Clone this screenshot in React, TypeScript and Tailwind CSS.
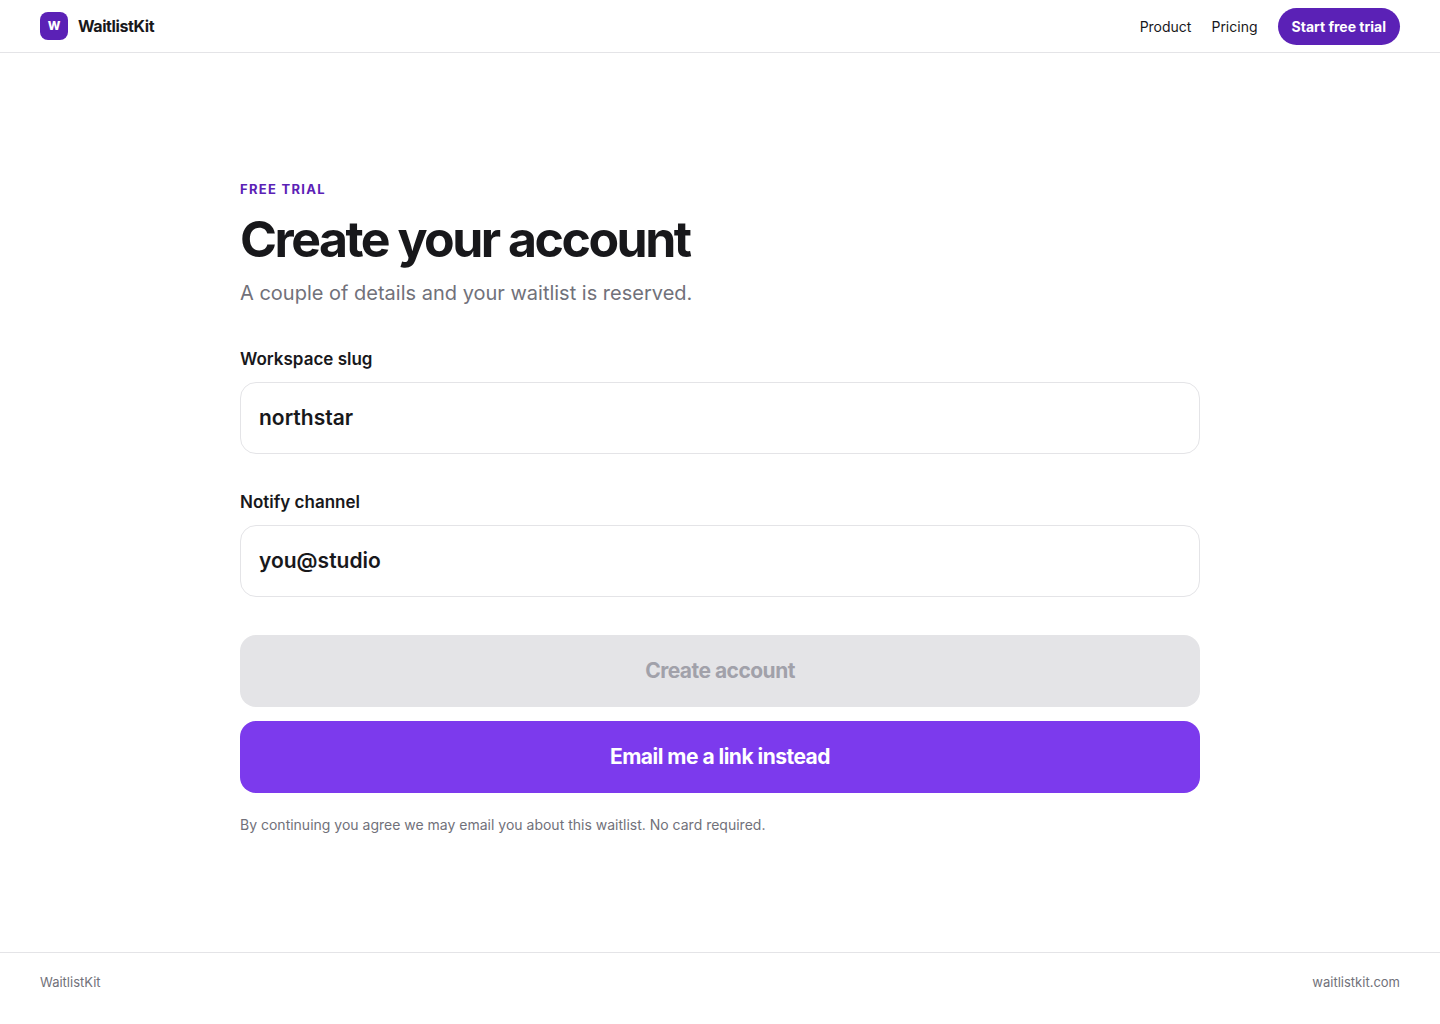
import { useState } from 'react'
import type { FormEvent } from 'react'

interface FieldProps {
  id: string
  label: string
  value: string
  onChange: (value: string) => void
}

const NAV_LINKS = [
  { label: 'Product', href: '#product' },
  { label: 'Pricing', href: '#pricing' },
]

function Header() {
  return (
    <header className="flex h-[53px] items-center justify-between border-b border-[#e4e4e7] px-10">
      <a href="#home" className="flex items-center gap-2.5">
        <span
          className="flex size-7 items-center justify-center rounded-lg bg-[#5b21b6] text-xs font-extrabold text-white"
          aria-hidden="true"
        >
          W
        </span>
        <span className="text-base font-bold tracking-tight">WaitlistKit</span>
      </a>

      <nav className="flex items-center gap-5 text-sm leading-[21px]" aria-label="Main">
        {NAV_LINKS.map((link) => (
          <a key={link.href} href={link.href}>
            {link.label}
          </a>
        ))}
        <a
          href="#trial"
          className="rounded-full bg-[#5b21b6] px-3.5 py-2 font-bold text-white hover:bg-violet-700"
        >
          Start free trial
        </a>
      </nav>
    </header>
  )
}

function Field({ id, label, value, onChange }: FieldProps) {
  return (
    <div className="flex flex-col gap-[11px]">
      <label htmlFor={id} className="text-[17px] leading-6 font-semibold">
        {label}
      </label>
      <input
        id={id}
        type="text"
        value={value}
        onChange={(e) => onChange(e.target.value)}
        className="h-18 w-full rounded-2xl border border-[#e4e4e7] bg-white px-[18px] text-[21px] font-semibold outline-none focus:border-violet-600"
      />
    </div>
  )
}

function SignupForm() {
  const [slug, setSlug] = useState('northstar')
  const [channel, setChannel] = useState('you@studio')

  function handleSubmit(e: FormEvent) {
    e.preventDefault()
  }

  return (
    <form onSubmit={handleSubmit} className="mt-10">
      <div className="flex flex-col gap-9">
        <Field id="slug" label="Workspace slug" value={slug} onChange={setSlug} />
        <Field id="channel" label="Notify channel" value={channel} onChange={setChannel} />
      </div>

      <div className="mt-[38px] flex flex-col gap-3.5 text-[21px] font-bold tracking-tight">
        <button
          type="submit"
          disabled
          className="h-18 rounded-2xl bg-[#e4e4e7] text-[#a1a1aa] disabled:cursor-not-allowed"
        >
          Create account
        </button>
        <button type="button" className="h-18 rounded-2xl bg-[#7c3aed] text-white hover:bg-violet-700">
          Email me a link instead
        </button>
      </div>
    </form>
  )
}

export default function App() {
  return (
    <div className="flex min-h-screen flex-col bg-white font-['Inter',sans-serif] text-[#18181b] antialiased">
      <Header />

      <main className="flex flex-1 flex-col justify-center px-10 pt-2">
        <div className="mx-auto w-full max-w-[960px]">
          <p className="text-[13px] leading-5 font-bold tracking-widest text-[#5b21b6] uppercase">
            Free trial
          </p>
          <h1 className="mt-3 text-[50px] leading-14 font-bold tracking-tighter">Create your account</h1>
          <p className="mt-3 text-xl leading-7 text-[#71717a]">
            A couple of details and your waitlist is reserved.
          </p>

          <SignupForm />

          <p className="mt-[22px] text-sm leading-5 text-[#71717a]">
            By continuing you agree we may email you about this waitlist. No card required.
          </p>
        </div>
      </main>

      <footer className="flex justify-between border-t border-[#e4e4e7] px-10 pt-5 pb-[33px] text-[13px] leading-[18px] text-[#71717a]">
        <span>WaitlistKit</span>
        <a href="#site">waitlistkit.com</a>
      </footer>
    </div>
  )
}
